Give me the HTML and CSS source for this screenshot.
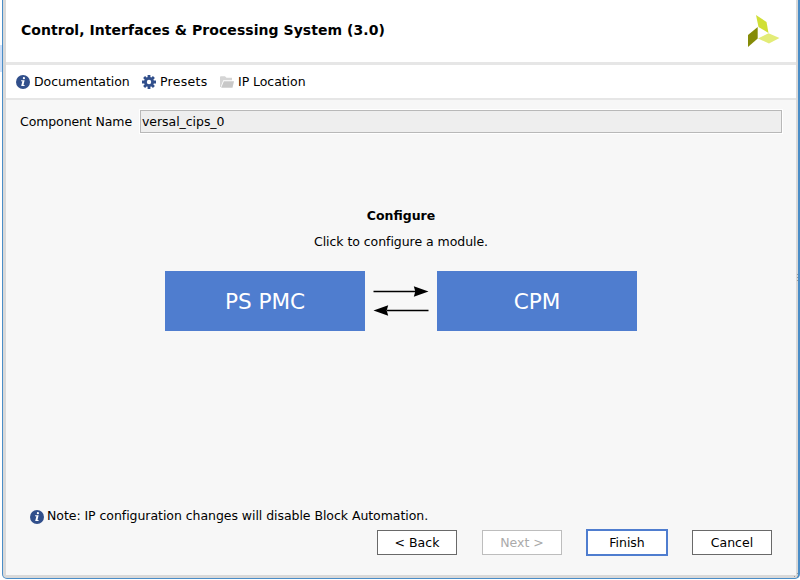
FILE: index.html
```html
<!DOCTYPE html>
<html lang="en">
<head>
<meta charset="utf-8">
<title>Control, Interfaces &amp; Processing System (3.0)</title>
<link rel="stylesheet" href="styles.css">
</head>
<body>
<svg class="symbols" width="0" height="0">
  <symbol id="info" viewBox="0 0 14 14">
    <circle cx="7" cy="7" r="7" fill="#314f8b"/>
    <circle cx="7.9" cy="3.2" r="1.1" fill="#fff"/>
    <path d="M5.2 5.3H8.6L7.5 10H8.7L8.4 11H5.2L6.4 6.2H5Z" fill="#fff"/>
  </symbol>
</svg>
<div class="dialog">
  <header class="header">
    <h1>Control, Interfaces &amp; Processing System (3.0)</h1>
    <svg class="logo" width="32" height="32" viewBox="0 0 32 32">
      <path d="M8 0L18.5 7 20.5 18 10.5 12Z" fill="#d0df36"/>
      <path d="M0 20L9.7 12V23.5L0 32Z" fill="#858b08"/>
      <path d="M10 23.5L20.5 18.2 31.5 23 21 28.5Z" fill="#e3ec77"/>
    </svg>
  </header>
  <nav class="toolbar">
    <a class="tool docs"><svg width="14" height="14"><use href="#info"/></svg><span>Documentation</span></a>
    <a class="tool presets"><svg width="14" height="14" viewBox="0 0 14 14">
      <g stroke="#314f8b" stroke-width="2.8"><path d="M7 0V14M0 7H14M2.1 2.1L11.9 11.9M11.9 2.1L2.1 11.9"/></g>
      <circle cx="7" cy="7" r="5" fill="#314f8b"/><circle cx="7" cy="7" r="2.2" fill="#fff"/>
    </svg><span>Presets</span></a>
    <a class="tool location"><svg width="14" height="12" viewBox="0 0 14 12">
      <path d="M0 11V1Q0 .2 1 .2H5L6.5 1.8H12V4.2H3.3L1.2 9.5V11Z" fill="#d5d5d5"/>
      <path d="M3.8 5.3H14L12.5 11.7H1.2Z" fill="#c8c8c8"/>
    </svg><span>IP Location</span></a>
  </nav>
  <main class="content">
    <div class="name-row"><label>Component Name</label><div class="field"><span>versal_cips_0</span></div></div>
    <h2><span>Configure</span></h2>
    <p class="hint"><span>Click to configure a module.</span></p>
    <div class="modules">
      <div class="module"><span>PS PMC</span></div>
      <svg class="arrows" width="72" height="60" viewBox="0 0 72 60">
        <path d="M8.5 20.5H52M22 39.5H63.5" stroke="#000" stroke-width="1.3"/>
        <path d="M63.5 20.5L48.8 15.2 50.3 20.5 48.8 25.8ZM8.5 39.5L23.2 34.2 21.7 39.5 23.2 44.8Z"/>
      </svg>
      <div class="module"><span>CPM</span></div>
    </div>
    <div class="note"><svg width="14" height="14"><use href="#info"/></svg><span>Note: IP configuration changes will disable Block Automation.</span></div>
    <footer class="buttons">
      <button>&lt; Back</button>
      <button disabled>Next &gt;</button>
      <button class="primary">Finish</button>
      <button>Cancel</button>
    </footer>
  </main>
  <i class="grip side"></i>
  <i class="grip corner"></i>
</div>
</body>
</html>
```
FILE: styles.css
```css
* { box-sizing: border-box; }
body {
  margin: 0;
  width: 800px;
  height: 580px;
  overflow: hidden;
  padding: 0 0 1px 2px;
  background: linear-gradient(#cfe0f8, #cfe0f8) 0 45px / 2px 27px no-repeat #fff;
  font: 12.5px/16px "DejaVu Sans", sans-serif;
  letter-spacing: -.05px;
  color: #000;
}
.symbols { display: none; }
.dialog {
  position: relative;
  height: 579px;
  border: 1px solid #4a8dc7;
  border-top: 0;
  border-right-width: 2px;
  border-radius: 0 0 5px 5px;
  padding: 0 2px 3px 3px;
  background: #d9d9d9;
  display: flex;
  flex-direction: column;
}
.header {
  height: 65px;
  border-bottom: 3px solid #e6e6e6;
  background: #fff;
  display: flex;
  justify-content: space-between;
  padding: 15px 16px 0 15px;
}
h1 { margin: 5px 0 0; font-size: 14px; line-height: 20px; letter-spacing: .05px; white-space: nowrap; }
.toolbar {
  height: 35px;
  border-bottom: 2px solid #e6e6e6;
  background: #fff;
  display: flex;
  align-items: center;
  padding-left: 10px;
}
.tool { display: flex; align-items: center; gap: 4px; white-space: nowrap; }
.docs { width: 126px; }
.presets { width: 78px; letter-spacing: .3px; }
.content {
  flex: 1;
  background: #f7f7f7;
  display: flex;
  flex-direction: column;
}
.name-row { display: flex; align-items: center; margin: 10px 14px 0 14px; height: 23px; }
.name-row label { width: 120px; letter-spacing: -.1px; }
.field {
  flex: 1;
  height: 23px;
  border: 1px solid #b8b8b8;
  background: #eee;
  padding: 3px 1px;
  box-shadow: 0 0 0 1px #fff;
}
h2 { margin: 75px 0 0; font-size: 12.5px; line-height: 16px; letter-spacing: 0; text-align: center; }
.hint { margin: 10px 0 0; text-align: center; }
.modules { display: flex; margin: 21px 0 0 159px; }
.module {
  width: 200px;
  height: 60px;
  padding-top: 1px;
  background: #4f7dcf;
  color: #fff;
  font-size: 21.6px;
  display: flex;
  align-items: center;
  justify-content: center;
}
.note { display: flex; align-items: center; gap: 3px; margin: 177px 0 0 24px; white-space: nowrap; }
.note svg { position: relative; top: 1px; }
.buttons { display: flex; align-items: center; margin: 5px 0 0 371px; }
button {
  flex: none;
  width: 80px;
  height: 25px;
  margin: 0 25px 0 0;
  padding: 1px 0 0;
  border: 1px solid #696969;
  background: #fff;
  color: #000;
  font: inherit;
  letter-spacing: 0;
}
button:last-child { margin-right: 0; }
button:disabled { border-color: #bdbdbd; color: #aaa; }
button.primary { width: 82px; height: 27px; border: 2px solid #4f7dcf; margin: 0 24px 0 -1px; }
.grip { position: absolute; width: 1px; height: 1px; background: #999; }
.side { right: 0; top: 274px; box-shadow: 0 3px #999, 0 6px #999; }
.corner { right: 0; bottom: 4px; box-shadow: 0 3px #999, -3px 3px #999; }
```
